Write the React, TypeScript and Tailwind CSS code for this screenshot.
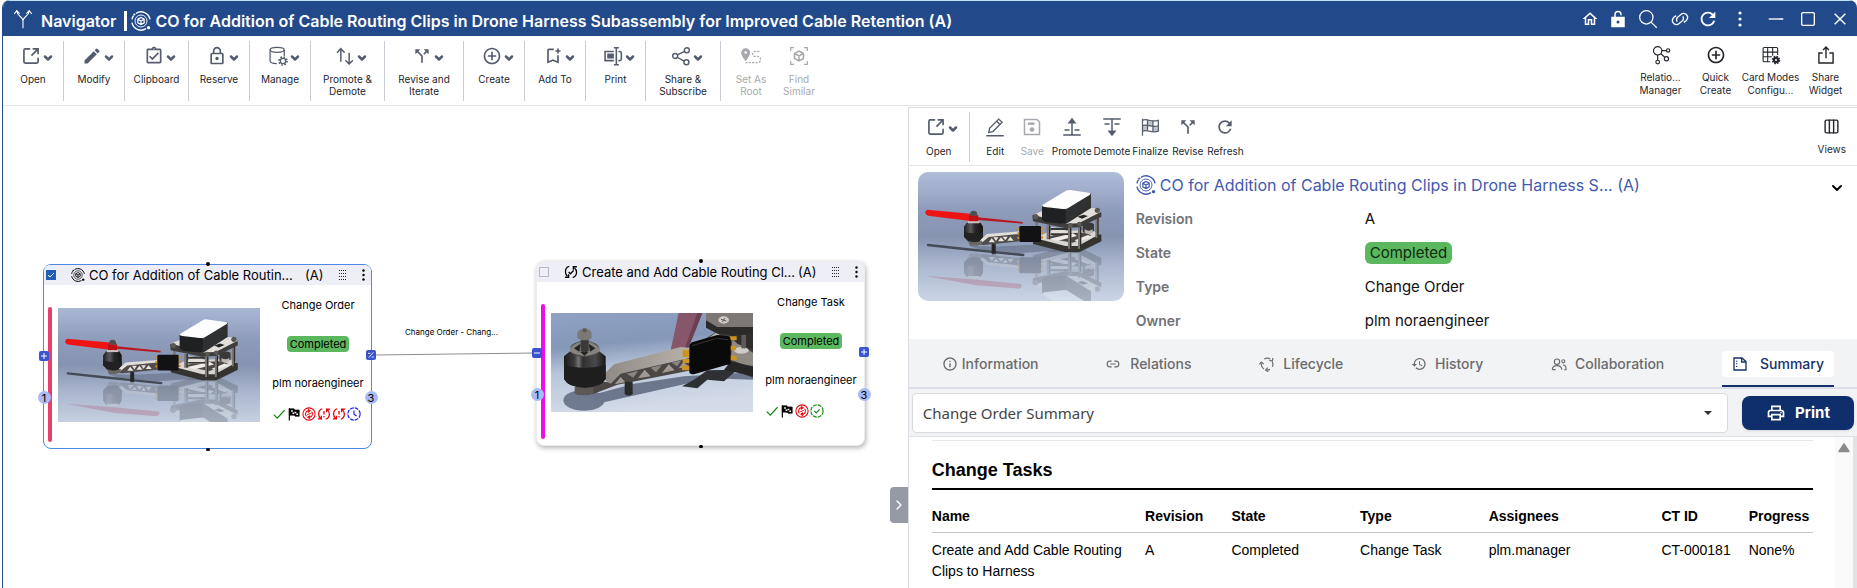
import { useState } from "react";
import type { ReactNode } from "react";
import {
  MdCallSplit,
  MdControlPoint,
  MdEdit,
  MdHistory,
  MdOutlineAssignmentTurnedIn,
  MdOutlineBookmarkAdd,
  MdOutlineHome,
  MdOutlineInfo,
  MdOutlineLock,
  MdOutlinePrint,
  MdRefresh,
} from "react-icons/md";
import { ChevronDown, ChevronRight, Columns3, Link2 } from "lucide-react";

type SvgProps = { children: ReactNode; className?: string; width?: number };

function Svg({ children, className = "size-5", width = 1.6 }: SvgProps) {
  return (
    <svg viewBox="0 0 24 24" className={className} fill="none" stroke="currentColor" strokeWidth={width} aria-hidden="true">
      {children}
    </svg>
  );
}

/* ---------- icons ---------- */

function OpenIcon() {
  return (
    <Svg className="size-5" width={2}>
      <path d="M11 3.5H5A1.5 1.5 0 0 0 3.5 5v14A1.5 1.5 0 0 0 5 20.500h14a1.500 1.500 0 0 0 1.500-1.500v-5" />
      <path d="M14 3.500h6.500V10M20 4l-7.500 7.500" />
    </Svg>
  );
}

function DatabaseGearIcon() {
  return (
    <Svg className="size-5" width={1.5}>
      <ellipse cx="11" cy="4.500" rx="8.500" ry="3" />
      <path d="M2.500 4.500V18c0 1.700 3.500 3 8 3M19.500 4.500V12" />
      <circle cx="18" cy="18" r="3.200" />
      <circle cx="18" cy="18" r="4.800" strokeDasharray="1.900 1.870" strokeWidth="2" />
    </Svg>
  );
}

function UpDownIcon() {
  return (
    <Svg className="size-5" width={1.8}>
      <path d="M7 19V3M2.500 8 7 3l4.500 5M17 8v13.500M12.500 17l4.500 4.500L21.500 17" />
    </Svg>
  );
}

function LabelPrinterIcon() {
  return (
    <Svg className="size-5" width={1.9}>
      <path d="M13 6.500H2.500v11H13M13 10H6v4h7M18.500 6.500H20a2 2 0 0 1 2 2v7a2 2 0 0 1-2 2h-1.500" />
      <path d="M13 2h6M13 22.500h6M16 2v20.500" />
      <path d="M6 12h7" strokeWidth="3" />
    </Svg>
  );
}

function ShareIcon() {
  return (
    <Svg className="size-5" width={1.7}>
      <circle cx="5" cy="12" r="3" />
      <circle cx="19" cy="5" r="3" />
      <circle cx="18.500" cy="19.500" r="3" />
      <path d="m7.700 10.700 8.600-4.300M7.500 13.500l8.500 4.700" />
    </Svg>
  );
}

function RootIcon() {
  return (
    <Svg className="size-5" width={1.5}>
      <path d="M5.500 17C2.500 13 1 10.500 1 8a4.600 4.600 0 0 1 9.200 0c0 2.500-1.700 5-4.700 9Z" fill="currentColor" />
      <circle cx="5.600" cy="7.800" r="1.500" fill="white" stroke="none" />
      <path d="M22 6.500h-5a3 3 0 0 0 0 6h3a3.500 3.500 0 0 1 0 7.500H5.500" strokeDasharray="2.600 1.500" />
    </Svg>
  );
}

function Cube({ scale = 1 }: { scale?: number }) {
  return (
    <g transform={`translate(12 12) scale(${scale})`}>
      <path d="M0-5 4.500-2.500V2.500L0 5-4.500 2.500V-2.500ZM-4.500-2.500 0 0l4.500-2.500M0 0v5" />
    </g>
  );
}

function FindSimilarIcon() {
  return (
    <Svg className="size-5" width={1.5}>
      <path d="M2 6V2h4M18 2h4v4M22 18v4h-4M6 22H2v-4" />
      <Cube scale={1.2} />
    </Svg>
  );
}

function ChangeOrderIcon({ className = "size-5" }: { className?: string }) {
  return (
    <Svg className={className} width={1.7}>
      <path d="M6 2.800A11 11 0 0 1 22.800 10M1.200 14A11 11 0 0 0 18 21.200" />
      <path d="M1.200 10A11 11 0 0 1 3 5.500" />
      <circle cx="12" cy="12" r="7.200" strokeWidth="1.100" />
      <Cube scale={0.85} />
      <circle cx="4" cy="4.200" r="1.300" fill="currentColor" stroke="none" />
      <circle cx="21" cy="20" r="2" fill="currentColor" stroke="none" />
    </Svg>
  );
}

function ChangeTaskIcon() {
  return (
    <Svg className="size-[14px]" width={2.2}>
      <path d="M9 2.500C5 3.500 2.500 7 2.500 11.500c0 3 1.500 6 3.500 7.500M2 21h6v-5M15 21.500c4-1 6.500-4.500 6.500-9 0-3-1.500-6-3.500-7.500M22 3h-6v5" />
      <path d="m8 12 3 3 5.500-5.500" />
    </Svg>
  );
}

function RelationIcon() {
  return (
    <Svg className="size-5" width={1.4}>
      <circle cx="8" cy="7" r="5" />
      <circle cx="20.500" cy="6.500" r="2" />
      <circle cx="8" cy="20.500" r="2.200" />
      <circle cx="18.500" cy="16.500" r="2.500" />
      <path d="M13 6.700h5.500M8 12v6M12 10.500l4.500 4.300" />
    </Svg>
  );
}

function TableGearIcon() {
  return (
    <Svg className="size-5" width={1.3}>
      <path d="M11 20H4a1.500 1.500 0 0 1-1.500-1.500v-14A1.500 1.500 0 0 1 4 3h14.500A1.500 1.500 0 0 1 20 4.500V12M2.500 8.500H20M2.500 14H13M8 3v17M14 3v10" />
      <circle cx="18" cy="18" r="2.500" strokeWidth="2.600" />
      <circle cx="18" cy="18" r="4.300" strokeDasharray="2 1.370" strokeWidth="1.600" />
    </Svg>
  );
}

function UploadIcon() {
  return (
    <Svg className="size-5" width={1.7}>
      <path d="M8 9.500H3.500v12h17v-12H16M12 16V2.500M8.500 6 12 2.500 15.500 6" />
    </Svg>
  );
}

function ForkIcon() {
  return (
    <Svg className="size-5" width={1.3}>
      <path d="M12 23v-9C12 9 5 9 4.500 2.500M12 14c0-5 7-5 7.500-11.500M1.500 6l3-4 3.500 3.500M16 5.500 19.500 2l3 4" />
    </Svg>
  );
}

function PencilLineIcon() {
  return (
    <Svg className="size-5" width={1.6}>
      <path d="m4.500 18.500 1-5L16.500 2.500l4 3.800L9.500 17.500ZM14 5l4 4M1.500 22.500h21" />
    </Svg>
  );
}

function SaveIcon() {
  return (
    <Svg className="size-5" width={1.8}>
      <path d="M3 3h15l3 3v15H3Z" />
      <path d="M7 8h8" strokeWidth="3" />
      <circle cx="12" cy="15" r="2.800" fill="currentColor" stroke="none" />
    </Svg>
  );
}

function PromoteIcon({ flip = false }: { flip?: boolean }) {
  return (
    <svg viewBox="0 0 24 24" className={flip ? "size-5 rotate-180" : "size-5"} fill="none" stroke="currentColor" strokeWidth="1.800" aria-hidden="true">
      <path d="M1.500 21.500h21M3 15.500h6M15 15.500h6M12 21V4" />
      <path d="m8.500 7 3.500-4.500L15.500 7Z" fill="currentColor" />
    </svg>
  );
}

function FinalizeIcon() {
  return (
    <Svg className="size-5" width={1.5}>
      <path d="M3 2v20.500M3 4c6-3 9 3 19 0v13c-9 3-13-3-19 0" />
      <path d="M3 10.500c6-3 10 3 19 0M9 3v13M15.500 4.500v13" />
      <path d="M9 3.500v6l6.500 1.500V5ZM3 10.500v6l6-1v-6ZM15.500 11v6.500l6.500-.5v-6Z" fill="currentColor" opacity="0.350" stroke="none" />
    </Svg>
  );
}

function LifecycleIcon() {
  return (
    <Svg className="size-4" width={1.8}>
      <path d="M8 4.500a9 9 0 0 1 9 0M20 8.500a9 9 0 0 1 0 7.500M16.500 20a9 9 0 0 1-5 .8M7.500 19.500A9 9 0 0 1 3.500 11" />
      <path d="M0.500 12.500 3.500 9 7 12M15.500 6.500 20 7.500 21 3M13 17.500 10 21l4 2.500" />
    </Svg>
  );
}

function PeopleIcon() {
  return (
    <Svg className="size-4" width={1.7}>
      <circle cx="9" cy="8.500" r="4" />
      <path d="M2 20.500c0-4 3-6 7-6 3.500 0 6 1.500 7 4.500v1.500M2 20.500h5" />
      <circle cx="18.500" cy="8" r="2.300" />
      <path d="M18 13.500c3 0 4.500 2 4.500 5v2H20" />
    </Svg>
  );
}

function SummaryIcon() {
  return (
    <Svg className="size-4" width={2}>
      <path d="M3 3h12l6 5.500V21H3Z" />
      <path d="M14.500 3v6H21" />
      <path d="M7 7v1.500M7 11v1.500M7 15v1.500" />
    </Svg>
  );
}

function FlagIcon() {
  return (
    <Svg className="size-[14px]" width={2}>
      <path d="M4 2v21" />
      <path d="M4 3h8l1.500 2H21v11h-7l-1.500-2H4Z" fill="currentColor" strokeWidth="1" />
      <path d="M7 5.500h3V8H7ZM13 8h3v2.500h-3ZM9.500 9.500h3V12h-3ZM16 11h3v2.500h-3Z" fill="white" stroke="none" />
    </Svg>
  );
}

function SyncRingIcon() {
  return (
    <Svg className="size-[14px] text-red-600" width={1.8}>
      <circle cx="12" cy="12" r="10.500" />
      <path d="M10 6.500a6 6 0 0 0-2.500 9.500M14 17.500a6 6 0 0 0 2.500-9.500M11 4.500v4l3-2ZM13 19.500v-4l-3 2Z" />
      <path d="m9 13.500 6-3" />
    </Svg>
  );
}

function SyncAlertIcon() {
  return (
    <Svg className="size-[14px] text-red-600" width={2.2}>
      <path d="M9 3C5.500 4 2.800 7.500 2.800 12c0 3 1.200 5.500 3.200 7.500M1.500 20.500h6v-5.500M15 21c3.500-1 6.200-4.500 6.200-9 0-3-1.200-5.500-3.200-7.500M22.500 3.500h-6V9" />
      <path d="M12 7v6M12 15.500v2" />
    </Svg>
  );
}

function ClockRingIcon() {
  return (
    <Svg className="size-[14px] text-[#1a1ae6]" width={2}>
      <circle cx="12" cy="12" r="10.500" strokeDasharray="6.500 1.750" />
      <path d="M12 6v6.500l4.500 3" />
    </Svg>
  );
}

function CheckRingIcon() {
  return (
    <Svg className="size-[14px] text-[#118a11]" width={2}>
      <circle cx="12" cy="12" r="10.500" strokeDasharray="6.500 1.750" />
      <path d="m7.500 12 3.200 3.200 5.800-6" />
    </Svg>
  );
}

function CheckIcon() {
  return (
    <Svg className="size-[14px] text-[#118a11]" width={2.2}>
      <path d="m3 13 6 6L21.500 5.500" />
    </Svg>
  );
}

function DragIcon() {
  return (
    <svg viewBox="0 0 8 10" className="h-[10px] w-2" fill="#222" aria-hidden="true">
      {[0, 2, 4, 6].map((x) => [0, 3, 6, 9].map((y) => <rect key={`${x}-${y}`} x={x} y={y} width="1" height="1" />))}
    </svg>
  );
}

function KebabIcon({ className }: { className: string }) {
  return (
    <svg viewBox="0 0 4 16" className={className} fill="currentColor" aria-hidden="true">
      <circle cx="2" cy="2" r="1.600" />
      <circle cx="2" cy="8" r="1.600" />
      <circle cx="2" cy="14" r="1.600" />
    </svg>
  );
}

/* ---------- part renderings ---------- */

function DroneImage({ id, className }: { id: string; className: string }) {
  return (
    <svg viewBox="0 0 618 387" preserveAspectRatio="xMidYMid slice" className={className} role="img" aria-label="Drone">
      <defs>
        <linearGradient id={`${id}-bg`} x1="0" y1="0" x2="0" y2="1">
          <stop offset="0" stopColor="#b0bdd9" />
          <stop offset="0.300" stopColor="#8e9cbb" />
          <stop offset="0.500" stopColor="#8694b0" />
          <stop offset="0.720" stopColor="#aab7ce" />
          <stop offset="1" stopColor="#ccd5e6" />
        </linearGradient>
        <linearGradient id={`${id}-motor`} x1="0" y1="0" x2="1" y2="0">
          <stop offset="0" stopColor="#1f1f20" />
          <stop offset="0.350" stopColor="#59595b" />
          <stop offset="0.600" stopColor="#262627" />
          <stop offset="1" stopColor="#151516" />
        </linearGradient>
        <g id={`${id}-body`}>
          {/* lower plate */}
          <path d="M345 200 395 180 520 176 550 188 550 208 484 240 440 240 345 216Z" fill="#34332f" />
          <path d="M350 198 395 178 520 174 546 186 480 222 442 222Z" fill="#d9d5d0" />
          <path d="M385 198 420 184 500 182 520 190 464 212Z" fill="#4c4946" />
          <path d="m395 200 70-16 12 8-60 15ZM470 205l40-16 12 6-42 14Z" fill="#efece8" />
          {/* standoffs */}
          <path d="M386 160h10v42h-10ZM450 168h10v62h-10ZM480 165h9v65h-9ZM532 135h9v62h-9ZM352 145h8v50h-8Z" fill="#7b7773" />
          <path d="M393 160h4v42h-4ZM456 168h4v62h-4ZM486 165h4v65h-4ZM538 135h4v62h-4Z" fill="#2d2c2a" />
          <path d="M400 165 440 172 450 190 400 188Z" fill="#e2ded9" />
          <path d="M398 168h52v6h-52ZM398 184h52v5h-52Z" fill="#383634" />
          <path d="M494 160q14-14 34-4v20q-18 16-34 4Z" fill="#3b3937" />
          <path d="M500 172q12 8 24 0v10q-12 8-24 0Z" fill="#bdb8b2" />
          {/* top plate */}
          <path d="M343 130 380 118 535 112 550 122 550 134 484 166 440 168 345 148Z" fill="#3f3d3b" />
          <path d="M346 128 380 114 535 108 548 120 482 154 440 155Z" fill="#e2deda" />
          <path d="m478 134 18-6 14 4-18 8Z" fill="#262523" />
          <circle cx="353" cy="134" r="8" fill="#5a5754" />
          <circle cx="457" cy="160" r="7" fill="#5a5754" />
          <circle cx="484" cy="156" r="7" fill="#5a5754" />
          <circle cx="538" cy="115" r="8" fill="#5a5754" />
          {/* battery */}
          <path d="M372 100 444 112V156L380 150 372 142Z" fill="#1f2022" />
          <path d="M444 112 519 64V108L450 152 442 156Z" fill="#2f3032" />
          <path d="M373 99 444 56Q449 53 456 54L512 62Q520 64 516 68L450 108Q443 112 435 111L380 105Q370 103 373 99Z" fill="#fdfdfd" />
        </g>
        <g id={`${id}-arm`}>
          <path d="M158 213 205 190 303 179V208L196 219Z" fill="#4f4c49" />
          <path d="M180 208 207 186 303 178V186L212 195 190 213Z" fill="#e2deda" />
          <path d="m212 211 9-12 10 12ZM240 208l9-12 10 12ZM268 206l9-12 10 12ZM226 196h15l-7 11ZM254 194h15l-7 11Z" fill="#e8e5e1" />
          <path d="M221 215h12v30h-12Z" fill="#252628" />
          {/* motor */}
          <path d="M150 206h42v10l-14 5h-22Z" fill="#6a6662" />
          <path d="M146 152h42l7 12v30l-11 14q-18 6-34 0l-12-14v-30Z" fill={`url(#${id}-motor)`} />
          <path d="M138 180q30 8 57 0v14l-11 12q-18 6-34 0l-12-12Z" fill="#222223" />
          <path d="M150 147h34v7h-34Z" fill="#c9c6c3" />
          {/* speed controller */}
          <path d="M298 168h10v7h-10ZM298 181h10v7h-10ZM298 194h10v7h-10ZM366 166h9v7h-9ZM366 179h9v7h-9ZM366 193h9v7h-9Z" fill="#d08f1e" />
          <rect x="304" y="162" width="65" height="48" rx="4" fill="#121113" />
        </g>
      </defs>
      <rect width="618" height="387" fill={`url(#${id}-bg)`} />
      <g opacity="0.220" transform="translate(0 466) scale(1 -1)">
        <use href={`#${id}-body`} />
        <use href={`#${id}-arm`} />
      </g>
      <path d="m24 312 140 10 144 14q8 6-4 14l-130-10Z" fill="#b0708a" opacity="0.400" />
      <path d="M150 220 220 224 345 218 370 212 550 208 484 242 380 238 300 244 180 232Z" fill="#5f6a80" opacity="0.550" />
      <path d="m30 219 110 12 176 18" stroke="#454b56" strokeWidth="7" strokeLinecap="round" fill="none" />
      <use href={`#${id}-body`} />
      <use href={`#${id}-arm`} />
      <path d="M28 113 158 125V147L30 131Q14 122 28 113Z" fill="#ee1414" />
      <path d="M180 136 314 150V155L180 144Z" fill="#b81823" />
      <path d="M153 130h28v18h-28Z" fill="#c01015" />
      <path d="M158 120q9-8 18 0l3 11h-24Z" fill="#4f4e4e" />
    </svg>
  );
}

function ArmImage({ className }: { className: string }) {
  return (
    <svg viewBox="0 0 608 297" preserveAspectRatio="xMidYMid slice" className={className} role="img" aria-label="Drone arm">
      <defs>
        <linearGradient id="arm-bg" x1="0" y1="0" x2="0.200" y2="1">
          <stop offset="0" stopColor="#8fa2c4" />
          <stop offset="0.350" stopColor="#8598b8" />
          <stop offset="0.600" stopColor="#b9c6da" />
          <stop offset="1" stopColor="#d3dae8" />
        </linearGradient>
        <linearGradient id="arm-motor" x1="0" y1="0" x2="1" y2="0">
          <stop offset="0" stopColor="#1b1b1c" />
          <stop offset="0.250" stopColor="#3c3c3d" />
          <stop offset="0.350" stopColor="#767573" />
          <stop offset="0.450" stopColor="#2f2f30" />
          <stop offset="0.750" stopColor="#4a4a4b" />
          <stop offset="1" stopColor="#151516" />
        </linearGradient>
        <linearGradient id="arm-top" x1="0" y1="0" x2="1" y2="0">
          <stop offset="0" stopColor="#8f8a85" />
          <stop offset="1" stopColor="#b9b3ab" />
        </linearGradient>
      </defs>
      <rect width="608" height="297" fill="url(#arm-bg)" />
      {/* floor shadows */}
      <ellipse cx="100" cy="262" rx="62" ry="31" fill="#6f7a8f" />
      <path d="M110 250 250 212 400 190 608 178V200L480 196 300 236 150 270Z" fill="#6c778d" />
      <path d="M394 220 430 200 470 172 560 170 520 205 470 200 440 226Z" fill="#2f3033" />
      {/* propeller */}
      <path d="M384 0H455L412 108 360 112Z" fill="#86566a" />
      <path d="M440 0H455L412 108 402 108Z" fill="#6a4052" />
      {/* centre frame */}
      <path d="M440 92 500 55 608 60V195L560 176 480 120Z" fill="#3f3d3b" />
      <path d="M448 92 500 56 506 66 470 82Z" fill="#bbb6ae" />
      <path d="M545 80 608 120V165L540 140Z" fill="#8f8a84" />
      <ellipse cx="572" cy="112" rx="22" ry="10" fill="#cfccc8" />
      <path d="M530 60H608V110L560 92Z" fill="#2f2e2d" />
      <path d="M572 66h14v40h-14Z" fill="#5c5956" />
      <path d="M466 0H608V44L500 42 466 24Z" fill="#7d7873" />
      <path d="M466 22 500 42H608V60L540 66 500 62 466 44Z" fill="#2b2a29" />
      <path d="M540 146 608 160V190L520 170Z" fill="#262627" />
      <ellipse cx="519" cy="21" rx="16" ry="11" fill="#cfccc8" />
      <path d="m511 19 16 5M523 15l-8 12" stroke="#5a5856" strokeWidth="3" />
      {/* arm */}
      <path d="M75 222 140 205 175 208 205 180 430 128V170L200 215 130 242 80 246Z" fill="#4a4744" />
      <path d="M158 186 190 154 390 102 430 106V132L210 182 180 212 166 204Z" fill="url(#arm-top)" />
      <path d="m192 214 18-22 14 16ZM262 196l20-26 18 20ZM334 180l20-26 18 18ZM384 166l14-18 18 14Z" fill="#a09a92" />
      <path d="m228 182 34-8-14 20ZM300 164l34-8-18 22ZM362 149l30-7-12 18Z" fill="#8a857e" />
      <path d="M222 206h24v38q-12 8-24 0Z" fill="#2a2a2b" />
      <path d="M72 222h56v20q-28 10-56 0Z" fill="#5c5853" />
      {/* motor */}
      <path d="M40 130 62 112H142L165 130V198Q150 224 102 224T40 198Z" fill="url(#arm-motor)" />
      <path d="M40 155Q102 175 165 155V198Q150 224 102 224T40 198Z" fill="#1e1e1f" />
      <ellipse cx="102" cy="108" rx="44" ry="24" fill="#4b4a48" />
      <path d="M58 104Q102 66 146 104V116Q102 140 58 116Z" fill="#86837f" />
      <path d="m70 106 20-14-4 24ZM134 106l-20-14 4 24ZM88 116h26l-12 12Z" fill="#222" />
      <path d="M90 76h24v38q-12 8-24 0Z" fill="#3b3a39" />
      <path d="m80 58 10-9h24l9 9v16l-12 8H92l-12-8Z" fill="#7b7976" />
      <path d="M96 46h12v12H96Z" fill="#5b5957" />
      {/* speed controller */}
      <path d="M396 110h24v22h-24ZM396 138h24v12h-24ZM394 158h26v14h-26ZM536 70h22v12h-22ZM536 98h20v14h-20ZM536 128h22v14h-22Z" fill="#cf9420" />
      <path d="M416 100Q416 92 424 88L500 66 534 70Q540 72 540 80V152L430 184Q416 184 416 176Z" fill="#0b0a0b" />
      <path d="M424 98 498 76 532 80" stroke="#333131" strokeWidth="3" fill="none" />
    </svg>
  );
}

/* ---------- toolbar ---------- */

const commands = [
  { label: "Open", icon: <OpenIcon />, width: "w-[61px]" },
  { label: "Modify", icon: <MdEdit className="size-5" />, width: "w-[61px]" },
  { label: "Clipboard", icon: <MdOutlineAssignmentTurnedIn className="size-5" />, width: "w-16" },
  { label: "Reserve", icon: <MdOutlineLock className="size-5" />, width: "w-[61px]" },
  { label: "Manage", icon: <DatabaseGearIcon />, width: "w-[61px]" },
  { label: "Promote & Demote", icon: <UpDownIcon />, width: "w-[74px]" },
  { label: "Revise and Iterate", icon: <MdCallSplit className="size-5" />, width: "w-[79px]" },
  { label: "Create", icon: <MdControlPoint className="size-5" />, width: "w-[61px]" },
  { label: "Add To", icon: <MdOutlineBookmarkAdd className="size-5" />, width: "w-[61px]" },
  { label: "Print", icon: <LabelPrinterIcon />, width: "w-[60px]" },
  { label: "Share & Subscribe", icon: <ShareIcon />, width: "w-[75px]" },
];

const widgetCommands = [
  { label: ["Relatio...", "Manager"], icon: <RelationIcon /> },
  { label: ["Quick", "Create"], icon: <MdControlPoint className="size-5" /> },
  { label: ["Card Modes", "Configu..."], icon: <TableGearIcon /> },
  { label: ["Share", "Widget"], icon: <UploadIcon /> },
];

function TitleBar() {
  return (
    <header className="flex h-9 items-center border-t border-[#bfe3f7] bg-[#22498a] pr-px pl-[10px] text-white">
      <ForkIcon />
      <h1 className="ml-2 flex min-w-0 items-center gap-1 pt-1 text-base leading-6 font-semibold whitespace-nowrap">
        <span>Navigator</span>
        <span className="ml-1 h-5 w-[3px] bg-white" />
        <ChangeOrderIcon className="size-5 shrink-0" />
        <span className="truncate">
          CO for Addition of Cable Routing Clips in Drone Harness Subassembly for Improved Cable Retention (A)
        </span>
      </h1>
      <div className="ml-auto flex items-center">
        <button aria-label="Home" className="w-7"><MdOutlineHome className="mx-auto size-[18px]" /></button>
        <button aria-label="Unlock" className="w-7">
          <Svg className="mx-auto size-[18px]" width={2}>
            <path d="M4 10h16v12H4Z" fill="currentColor" />
            <path d="M8 10V6a4 4 0 0 1 8 0v1" />
            <circle cx="12" cy="16" r="2" fill="#22498a" stroke="none" />
          </Svg>
        </button>
        <button aria-label="Search" className="w-8">
          <Svg className="mx-auto size-5" width={1.5}>
            <circle cx="10" cy="10" r="8" />
            <path d="m16 16 6.500 6.500" />
          </Svg>
        </button>
        <button aria-label="Copy link" className="w-8">
          <Svg className="mx-auto size-5" width={1.6}>
            <path d="M9 15.500a4.500 4.500 0 0 1 .5-6l3-3a4.800 4.800 0 0 1 8 5 5 5 0 0 1-1 1.800L17 15.500" transform="rotate(6 12 12)" />
            <path d="M15 8.500a4.500 4.500 0 0 1-.5 6l-3 3a4.800 4.800 0 0 1-8-5 5 5 0 0 1 1-1.800L7 8.500" transform="rotate(6 12 12)" />
          </Svg>
        </button>
        <button aria-label="Refresh" className="w-6"><MdRefresh className="mx-auto size-[22px]" /></button>
        <button aria-label="More" className="w-10"><KebabIcon className="mx-auto h-4 w-1" /></button>
        <button aria-label="Minimize" className="w-8">
          <Svg className="mx-auto size-4" width={2}><path d="M1 12h22" /></Svg>
        </button>
        <button aria-label="Maximize" className="w-8">
          <Svg className="mx-auto size-4" width={2}><rect x="2.500" y="2.500" width="19" height="19" rx="1.500" /></Svg>
        </button>
        <button aria-label="Close" className="w-8">
          <Svg className="mx-auto size-4" width={2.2}><path d="m4 4 16 16M20 4 4 20" /></Svg>
        </button>
      </div>
    </header>
  );
}

function CommandBar() {
  return (
    <nav className="flex items-start border-b border-[#e3e4e8] pt-[5px] pr-1 pb-1 text-[10px] leading-3 text-[#24262e]">
      {commands.map((c) => (
        <button key={c.label} className={`flex h-[60px] flex-col items-center border-r border-[#c9ccd3] px-1 pt-[5px] ${c.width}`}>
          <span className="flex items-center gap-px pl-2 text-[#545c6e]">
            {c.icon}
            <ChevronDown className="mt-1 size-3" strokeWidth={5} />
          </span>
          <span className="mt-[7px]">{c.label}</span>
        </button>
      ))}
      <button disabled className="ml-[6px] flex w-12 flex-col items-center pt-[5px] text-[#a7a9ae]">
        <RootIcon />
        <span className="mt-[7px]">Set As<br />Root</span>
      </button>
      <button disabled className="flex w-12 flex-col items-center pt-[5px] text-[#a7a9ae]">
        <FindSimilarIcon />
        <span className="mt-[7px]">Find<br />Similar</span>
      </button>
      <div className="ml-auto flex">
        {widgetCommands.map((c) => (
          <button key={c.label[0]} className="flex w-[55px] flex-col items-center pt-1 leading-[13px] whitespace-nowrap">
            {c.icon}
            <span className="mt-[6px]">
              {c.label[0]}
              <br />
              {c.label[1]}
            </span>
          </button>
        ))}
      </div>
    </nav>
  );
}

/* ---------- graph ---------- */

type NodeProps = {
  title: string;
  type: string;
  selected?: boolean;
  icon: ReactNode;
  image: ReactNode;
  bar: string;
  status: ReactNode;
  leftPort: ReactNode;
  rightPort: ReactNode;
  position: string;
};

function Port({ label, children }: { label: string; children: ReactNode }) {
  return (
    <button aria-label={label} className="grid size-[10px] place-items-center rounded-[2px] bg-[#3b53cf] text-white">
      {children}
    </button>
  );
}

const plus = <Svg className="size-2" width={3}><path d="M12 3v18M3 12h18" /></Svg>;
const minus = <Svg className="size-2" width={3}><path d="M3 12h18" /></Svg>;
const partial = <Svg className="size-2" width={2.5}><path d="M5 20 19 4M3 7h7M14 18h7" /></Svg>;

function GraphNode({ title, type, selected = false, icon, image, bar, status, leftPort, rightPort, position }: NodeProps) {
  const [checked, setChecked] = useState(selected);
  const frame = selected ? "border-[#4e87e4]" : "border-[#ececf0] shadow-[1px_2px_5px_rgba(0,0,0,0.3)]";
  return (
    <article className={`absolute h-[185px] w-[329px] rounded-lg border bg-white ${frame} ${position}`}>
      <div className="flex h-5 items-center rounded-t-md bg-[#eeeef6] pr-1 pl-[2px] text-black">
        <label className="relative grid size-[10px] place-items-center">
          <input
            type="checkbox"
            aria-label={`Select ${title}`}
            checked={checked}
            onChange={(e) => setChecked(e.target.checked)}
            className="size-[10px] appearance-none border border-[#b9bac4] checked:border-[#1f5fb5] checked:bg-[#1f5fb5]"
          />
          {checked && (
            <Svg className="absolute size-2 text-white" width={3}><path d="m3 12 6 6L21 6" /></Svg>
          )}
        </label>
        <span className="ml-[15px] flex shrink-0">{icon}</span>
        <span className="ml-1 w-[212px] text-[13px] leading-5 whitespace-nowrap">{title}</span>
        <span className="ml-1 text-[13px] leading-5">(A)</span>
        <span className="ml-auto"><DragIcon /></span>
        <button aria-label="Node menu" className="ml-3 w-2"><KebabIcon className="mx-auto h-3 w-[3px]" /></button>
      </div>
      <div className="flex gap-[6px] pt-[22px] pr-px pl-1">
        <span className={`h-[135px] w-1 shrink-0 rounded-sm ${bar}`} />
        <div className="flex h-[116px] w-[202px] shrink-0 items-center">{image}</div>
        <div className="-mt-[10px] flex flex-1 flex-col items-center text-[11px] leading-4 whitespace-nowrap">
          <span>{type}</span>
          <span className="mt-[23px] rounded bg-[#5cb85f] px-[3px]">Completed</span>
          <span className="mt-[23px]">plm noraengineer</span>
          <span className="mt-4 flex w-[92px] gap-px">{status}</span>
        </div>
      </div>
      {/* connectors on the card edges */}
      <span className="absolute -top-[3px] left-[162px] size-1 rounded-full bg-black" />
      <span className="absolute -bottom-[3px] left-[162px] h-[3px] w-1 rounded-full bg-black" />
      <div className="absolute top-[86px] -left-[6px] flex w-3 flex-col items-center gap-[30px]">
        <Port label="Incoming relations">{leftPort}</Port>
        <span className="grid size-[13px] place-items-center rounded-full bg-[#a9bbf5] text-[11px] leading-3">1</span>
      </div>
      <div className="absolute top-[85px] -right-[6px] flex w-3 flex-col items-center gap-[31px]">
        <Port label="Outgoing relations">{rightPort}</Port>
        <span className="grid size-[13px] place-items-center rounded-full bg-[#a9bbf5] text-[11px] leading-3">3</span>
      </div>
    </article>
  );
}

function GraphCanvas() {
  return (
    <section className="relative min-w-0 flex-1 overflow-hidden" aria-label="Relationship graph">
      <svg className="absolute top-[246px] left-[372px] h-1 w-[160px]" viewBox="0 0 160 4" aria-hidden="true">
        <path d="M0 3 160 1" stroke="#8d8d8d" strokeWidth="1" />
      </svg>
      <span className="absolute top-[220px] left-[402px] text-[8px] leading-3 whitespace-nowrap text-black">Change Order - Chang...</span>
      <GraphNode
        selected
        title="CO for Addition of Cable Routin..."
        type="Change Order"
        position="top-[158px] left-10"
        icon={<ChangeOrderIcon className="size-[14px]" />}
        image={<DroneImage id="node" className="h-[114px] w-full" />}
        bar="bg-[#e83f6b]"
        leftPort={plus}
        rightPort={partial}
        status={<><CheckIcon /><FlagIcon /><SyncRingIcon /><SyncAlertIcon /><SyncAlertIcon /><ClockRingIcon /></>}
      />
      <GraphNode
        title="Create and Add Cable Routing Cl..."
        type="Change Task"
        position="top-[155px] left-[533px]"
        icon={<ChangeTaskIcon />}
        image={<ArmImage className="h-[99px] w-full" />}
        bar="bg-[#f00ce6]"
        leftPort={minus}
        rightPort={plus}
        status={<><CheckIcon /><FlagIcon /><SyncRingIcon /><CheckRingIcon /></>}
      />
      <button aria-label="Collapse panel" className="absolute top-[381px] right-0 grid h-9 w-[18px] place-items-center rounded-l bg-[#969aa4] text-white">
        <ChevronRight className="size-4" />
      </button>
    </section>
  );
}

/* ---------- details panel ---------- */

const panelCommands = [
  { label: "Edit", icon: <PencilLineIcon /> },
  { label: "Save", icon: <SaveIcon />, disabled: true },
  { label: "Promote", icon: <PromoteIcon /> },
  { label: "Demote", icon: <PromoteIcon flip /> },
  { label: "Finalize", icon: <FinalizeIcon /> },
  { label: "Revise", icon: <MdCallSplit className="size-5" /> },
  { label: "Refresh", icon: <MdRefresh className="size-5" /> },
];

const tabs = [
  { label: "Information", icon: <MdOutlineInfo className="size-4" />, gap: "gap-1" },
  { label: "Relations", icon: <Link2 className="size-[14px]" />, gap: "gap-[10px]" },
  { label: "Lifecycle", icon: <LifecycleIcon />, gap: "gap-2" },
  { label: "History", icon: <MdHistory className="size-4" />, gap: "gap-2" },
  { label: "Collaboration", icon: <PeopleIcon />, gap: "gap-2" },
  { label: "Summary", icon: <SummaryIcon />, gap: "gap-3" },
];

const properties = [
  { name: "Revision", value: "A" },
  { name: "State", value: "Completed", badge: true },
  { name: "Type", value: "Change Order" },
  { name: "Owner", value: "plm noraengineer" },
];

function PanelToolbar() {
  return (
    <div className="flex items-start border-b border-[#e3e4e8] pt-1 pb-[3px] text-[10px] leading-3 text-[#24262e]">
      <button className="flex h-[50px] w-[61px] flex-col items-center border-r border-[#c9ccd3] pt-[5px]">
        <span className="flex items-center gap-px pl-2 text-[#545c6e]">
          <OpenIcon />
          <ChevronDown className="mt-1 size-3" strokeWidth={5} />
        </span>
        <span className="mt-2">Open</span>
      </button>
      <div className="ml-2 flex gap-[2px]">
        {panelCommands.map((c) => (
          <button
            key={c.label}
            disabled={c.disabled}
            className="group flex min-w-[35px] flex-col items-center pt-[5px] disabled:text-[#a7a9ae]"
          >
            <span className="text-[#545c6e] group-disabled:text-[#a7a9ae]">{c.icon}</span>
            <span className="mt-2">{c.label}</span>
          </button>
        ))}
      </div>
      <button className="mr-[11px] ml-auto flex flex-col items-center pt-[6px]">
        <Columns3 className="size-[17px]" />
        <span className="mt-2">Views</span>
      </button>
    </div>
  );
}

function ObjectHeader() {
  return (
    <div className="flex h-[173px] px-[9px] pt-[6px]">
      <DroneImage id="preview" className="h-[129px] w-[206px] shrink-0 rounded-[10px]" />
      <div className="ml-3 min-w-0 flex-1">
        <a href="#object" className="flex items-center gap-1 text-base leading-[26px] text-[#4359b0]">
          <ChangeOrderIcon className="size-5" />
          CO for Addition of Cable Routing Clips in Drone Harness S... (A)
        </a>
        <dl className="mt-1 text-[15px] leading-[22px]">
          {properties.map((p) => (
            <div key={p.name} className="flex h-[34px] items-center">
              <dt className="w-[229px] text-sm font-semibold text-[#717278]">{p.name}</dt>
              <dd className={p.badge ? "rounded-md bg-[#5cb85f] px-[5px] text-[#0c2a10]" : "text-[#111]"}>{p.value}</dd>
            </div>
          ))}
        </dl>
      </div>
      <button aria-label="Collapse header" className="mt-2 self-start pr-[3px]">
        <ChevronDown className="size-4" strokeWidth={3} />
      </button>
    </div>
  );
}

function Tabs() {
  const [active, setActive] = useState("Summary");
  return (
    <div role="tablist" className="flex items-stretch justify-between border-b-2 border-[#dcdde9] bg-[#f2f3f5] px-[23px]">
      {tabs.map((t) => {
        const on = t.label === active;
        return (
          <button
            key={t.label}
            role="tab"
            aria-selected={on}
            onClick={() => setActive(t.label)}
            className={`border-b-2 pt-3 pb-2 text-sm font-medium ${on ? "border-[#16316b] text-[#16316b]" : "border-transparent text-[#6a6b6e]"}`}
          >
            <span className={`flex h-[26px] items-center rounded-sm px-[10px] ${t.gap} ${on ? "bg-white" : ""}`}>
              {t.icon}
              {t.label}
            </span>
          </button>
        );
      })}
    </div>
  );
}

const columns = [
  { name: "Name", width: "w-[24.2%]" },
  { name: "Revision", width: "w-[9.8%]" },
  { name: "State", width: "w-[14.6%]" },
  { name: "Type", width: "w-[14.6%]" },
  { name: "Assignees", width: "w-[19.6%]" },
  { name: "CT ID", width: "w-[9.9%]" },
  { name: "Progress", width: "w-[7.3%]" },
];

const row = ["Create and Add Cable Routing Clips to Harness", "A", "Completed", "Change Task", "plm.manager", "CT-000181", "None%"];

function SummaryReport() {
  return (
    <div className="flex flex-1">
      <div className="flex-1 pt-[3px] pr-[22px] pl-[23px] font-['Liberation_Sans',Arial,sans-serif] text-black">
        <hr className="border-[#e8e8ec]" />
        <h2 className="border-b-2 border-black pt-[17px] pb-[6px] text-lg leading-6 font-bold">Change Tasks</h2>
        <table className="w-full table-fixed text-left text-sm leading-[21px]">
          <thead>
            <tr className="border-b border-[#c6c6c6]">
              {columns.map((c) => (
                <th key={c.name} className={`pt-4 pb-[5px] font-bold ${c.width}`}>{c.name}</th>
              ))}
            </tr>
          </thead>
          <tbody>
            <tr className="align-top">
              {row.map((cell) => (
                <td key={cell} className="pt-[7px]">{cell}</td>
              ))}
            </tr>
          </tbody>
        </table>
      </div>
      <div className="w-[18px] bg-[#fafafa] pt-[6px]">
        <svg viewBox="0 0 12 10" className="mx-auto h-[10px] w-3" aria-hidden="true">
          <path d="M6 1 11 8.500H1Z" fill="#8b8b8b" stroke="#8b8b8b" strokeWidth="1.500" strokeLinejoin="round" />
        </svg>
      </div>
      <div className="w-1 bg-[#e2e3e5]" />
    </div>
  );
}

function DetailsPanel() {
  return (
    <section className="mt-px flex w-[51.2%] flex-col border-t border-l border-[#dcdde2]">
      <PanelToolbar />
      <ObjectHeader />
      <Tabs />
      <div className="flex items-center gap-[14px] border-b border-[#dfe0e4] bg-[#f2f3f5] pt-1 pr-[3px] pb-[3px] pl-[3px]">
        <div className="relative flex-1">
          <select
            aria-label="Report"
            className="h-10 w-full appearance-none rounded border border-[#d9dade] bg-white px-[10px] font-['Noto_Sans','Open_Sans',sans-serif] text-[15px] text-[#444]"
          >
            <option>Change Order Summary</option>
          </select>
          <svg viewBox="0 0 8 4" className="absolute top-[18px] right-4 h-1 w-2" aria-hidden="true">
            <path d="M0 0h8L4 4Z" fill="#333" />
          </svg>
        </div>
        <button className="flex h-[34px] w-28 items-center justify-center gap-[9px] rounded-lg bg-[#0f2f6c] text-[15px] font-bold text-white shadow">
          <MdOutlinePrint className="size-5" />
          Print
        </button>
      </div>
      <SummaryReport />
    </section>
  );
}

export default function App() {
  return (
    <div className="min-h-screen bg-white pl-[2px] font-['Inter',sans-serif]">
      <div className="flex min-h-screen flex-col overflow-hidden rounded-t-lg border-l border-[#22498a]">
        <TitleBar />
        <CommandBar />
        <main className="flex flex-1">
          <GraphCanvas />
          <DetailsPanel />
        </main>
      </div>
    </div>
  );
}
